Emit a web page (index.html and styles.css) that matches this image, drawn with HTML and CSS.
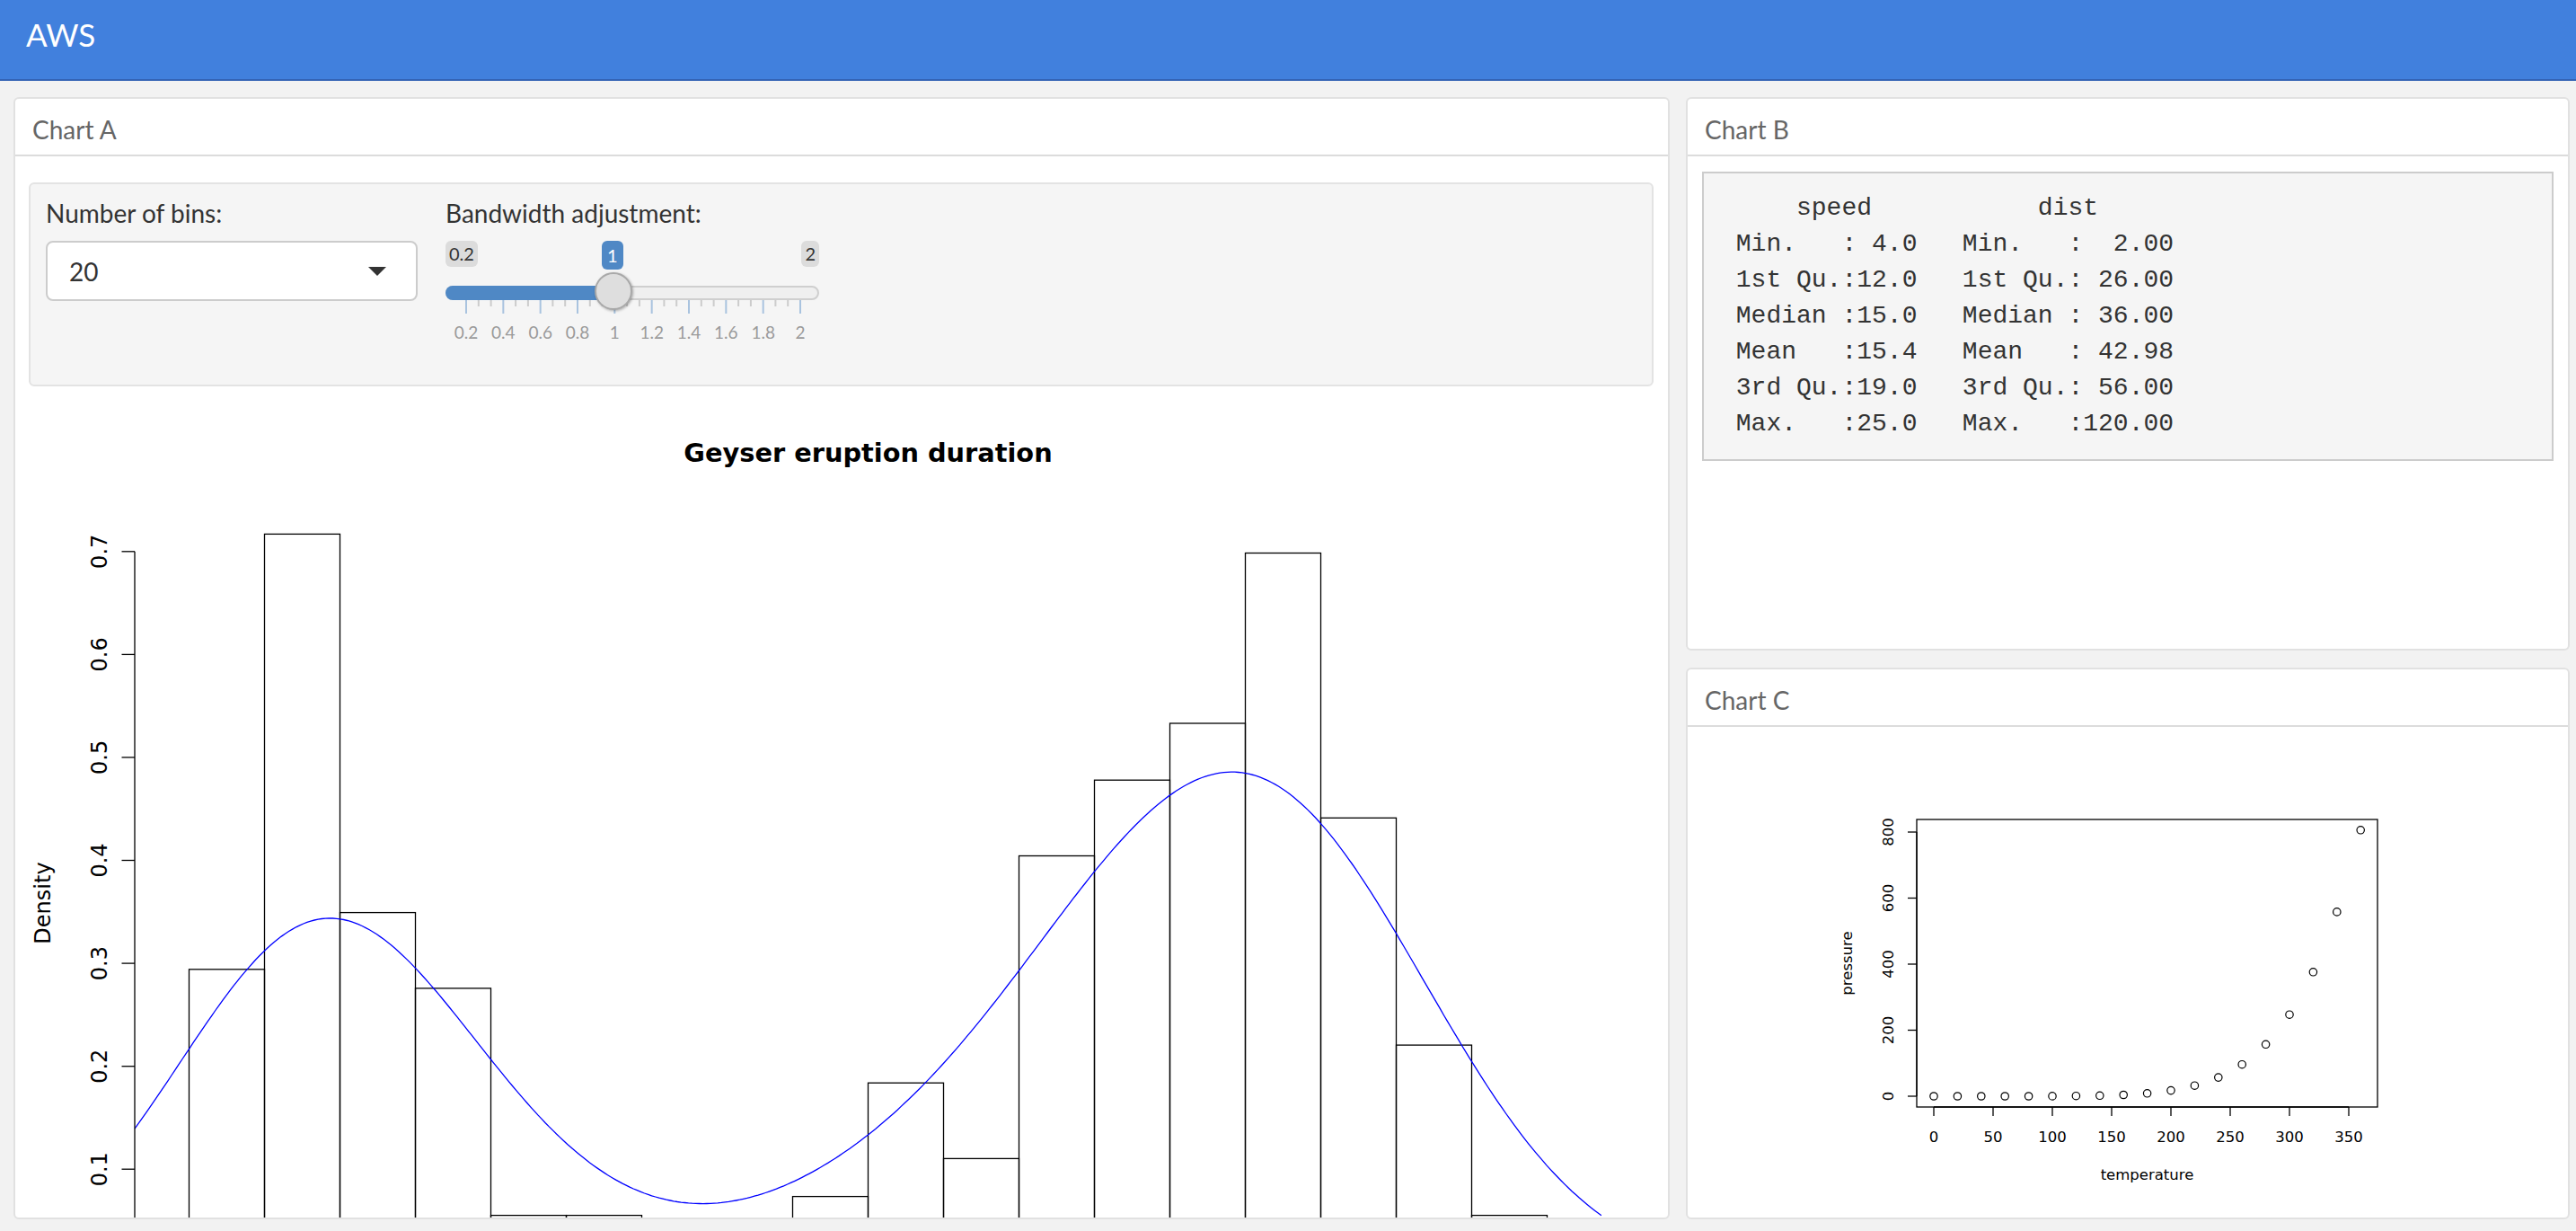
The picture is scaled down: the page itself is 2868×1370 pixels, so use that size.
FILE: index.html
```html
<!DOCTYPE html>
<html lang="en">
<head>
<meta charset="utf-8">
<title>AWS</title>
<link rel="stylesheet" href="styles.css">
<script src="script.js" defer></script>
</head>
<body>
<header class="navbar"><span class="brand">AWS</span></header>
<main class="dash">
  <section class="card card-a">
    <div class="card-title">Chart A</div>
    <div class="card-body body-a">
      <div class="well">
        <div class="field field-bins">
          <label class="field-label">Number of bins:</label>
          <div class="select"><span class="select-value">20</span><span class="caret"></span></div>
        </div>
        <div class="field field-bw">
          <label class="field-label">Bandwidth adjustment:</label>
          <div class="slider">
            <div class="irs-labels"><span class="irs-tag">0.2</span><span class="irs-tag">2</span></div>
            <span class="irs-single">1</span>
            <div class="track"><div class="bar" style="width:189px"></div></div>
            <div class="handle"></div>
            <svg class="grid" width="416" height="52" viewBox="0 0 416 52">
              <g class="grid-major">
                <line x1="23" y1="0" x2="23" y2="15"/><line x1="64.33" y1="0" x2="64.33" y2="15"/><line x1="105.67" y1="0" x2="105.67" y2="15"/><line x1="147" y1="0" x2="147" y2="15"/><line x1="188.33" y1="0" x2="188.33" y2="15"/><line x1="229.67" y1="0" x2="229.67" y2="15"/><line x1="271" y1="0" x2="271" y2="15"/><line x1="312.33" y1="0" x2="312.33" y2="15"/><line x1="353.67" y1="0" x2="353.67" y2="15"/><line x1="395" y1="0" x2="395" y2="15"/>
              </g>
              <g class="grid-minor">
                <line x1="36.8" y1="0" x2="36.8" y2="7"/><line x1="50.6" y1="0" x2="50.6" y2="7"/>
                <line x1="78.1" y1="0" x2="78.1" y2="7"/><line x1="91.9" y1="0" x2="91.9" y2="7"/>
                <line x1="119.4" y1="0" x2="119.4" y2="7"/><line x1="133.2" y1="0" x2="133.2" y2="7"/>
                <line x1="160.8" y1="0" x2="160.8" y2="7"/><line x1="174.6" y1="0" x2="174.6" y2="7"/>
                <line x1="202.1" y1="0" x2="202.1" y2="7"/><line x1="215.9" y1="0" x2="215.9" y2="7"/>
                <line x1="243.4" y1="0" x2="243.4" y2="7"/><line x1="257.2" y1="0" x2="257.2" y2="7"/>
                <line x1="284.8" y1="0" x2="284.8" y2="7"/><line x1="298.6" y1="0" x2="298.6" y2="7"/>
                <line x1="326.1" y1="0" x2="326.1" y2="7"/><line x1="339.9" y1="0" x2="339.9" y2="7"/>
                <line x1="367.4" y1="0" x2="367.4" y2="7"/><line x1="381.2" y1="0" x2="381.2" y2="7"/>
              </g>
              <g class="grid-text">
                <text x="23" y="43">0.2</text><text x="64.33" y="43">0.4</text><text x="105.67" y="43">0.6</text><text x="147" y="43">0.8</text><text x="188.33" y="43">1</text><text x="229.67" y="43">1.2</text><text x="271" y="43">1.4</text><text x="312.33" y="43">1.6</text><text x="353.67" y="43">1.8</text><text x="395" y="43">2</text>
              </g>
            </svg>
          </div>
        </div>
      </div>
      <svg class="plot-a" width="1810" height="1151" viewBox="32 444 1810 1151">
        <defs><clipPath id="regionA"><rect x="150" y="562" width="1633" height="886"/></clipPath></defs>
        <text class="rtitle" x="966.5" y="514">Geyser eruption duration</text>
        <g class="rbars">
          <rect x="210.5" y="1078.8" width="84" height="337"/>
          <rect x="294.5" y="594.4" width="84" height="821.4"/>
          <rect x="378.5" y="1015.6" width="84" height="400.2"/>
          <rect x="462.5" y="1099.9" width="84" height="315.9"/>
          <rect x="546.5" y="1352.6" width="84" height="63.2"/>
          <rect x="630.5" y="1352.6" width="84" height="63.2"/>
          <rect x="714.5" y="1394.7" width="84" height="21.1"/>
          <rect x="798.5" y="1373.7" width="84" height="42.1"/>
          <rect x="882.5" y="1331.6" width="84" height="84.2"/>
          <rect x="966.5" y="1205.2" width="84" height="210.6"/>
          <rect x="1050.5" y="1289.4" width="84" height="126.4"/>
          <rect x="1134.5" y="952.5" width="84" height="463.3"/>
          <rect x="1218.5" y="868.2" width="84" height="547.6"/>
          <rect x="1302.5" y="805" width="84" height="610.8"/>
          <rect x="1386.5" y="615.5" width="84" height="800.3"/>
          <rect x="1470.5" y="910.3" width="84" height="505.5"/>
          <rect x="1554.5" y="1163.1" width="84" height="252.7"/>
          <rect x="1638.5" y="1352.6" width="84" height="63.2"/>
        </g>
        <path id="dens" class="rdens" clip-path="url(#regionA)" d=""/>
        <g class="raxis">
          <line x1="150" y1="613.8" x2="150" y2="1415.8"/>
          <line x1="150" y1="1415.8" x2="135.5" y2="1415.8"/>
          <line x1="150" y1="1301.2" x2="135.5" y2="1301.2"/>
          <line x1="150" y1="1186.7" x2="135.5" y2="1186.7"/>
          <line x1="150" y1="1072.1" x2="135.5" y2="1072.1"/>
          <line x1="150" y1="957.5" x2="135.5" y2="957.5"/>
          <line x1="150" y1="842.9" x2="135.5" y2="842.9"/>
          <line x1="150" y1="728.4" x2="135.5" y2="728.4"/>
          <line x1="150" y1="613.8" x2="135.5" y2="613.8"/>
        </g>
        <g class="rlab">
          <text transform="translate(118.5 1301.2) rotate(-90)">0.1</text>
          <text transform="translate(118.5 1186.7) rotate(-90)">0.2</text>
          <text transform="translate(118.5 1072.1) rotate(-90)">0.3</text>
          <text transform="translate(118.5 957.5) rotate(-90)">0.4</text>
          <text transform="translate(118.5 842.9) rotate(-90)">0.5</text>
          <text transform="translate(118.5 728.4) rotate(-90)">0.6</text>
          <text transform="translate(118.5 613.8) rotate(-90)">0.7</text>
          <text transform="translate(56 1005) rotate(-90)">Density</text>
        </g>
      </svg>
    </div>
  </section>
  <div class="side">
    <section class="card card-b">
      <div class="card-title">Chart B</div>
      <div class="card-body body-b">
<pre class="verbatim">     speed           dist       
 Min.   : 4.0   Min.   :  2.00  
 1st Qu.:12.0   1st Qu.: 26.00  
 Median :15.0   Median : 36.00  
 Mean   :15.4   Mean   : 42.98  
 3rd Qu.:19.0   3rd Qu.: 56.00  
 Max.   :25.0   Max.   :120.00  </pre>
      </div>
    </section>
    <section class="card card-c">
      <div class="card-title">Chart C</div>
      <div class="card-body body-c">
        <svg class="plot-c" width="672" height="502" viewBox="2033 831 672 502">
          <rect class="cbox" x="2134" y="912" width="513" height="320"/>
          <g class="caxis">
            <line x1="2134" y1="1220" x2="2134" y2="926"/>
            <line x1="2134" y1="1220" x2="2124" y2="1220"/>
            <line x1="2134" y1="1146.5" x2="2124" y2="1146.5"/>
            <line x1="2134" y1="1073" x2="2124" y2="1073"/>
            <line x1="2134" y1="999.5" x2="2124" y2="999.5"/>
            <line x1="2134" y1="926" x2="2124" y2="926"/>
            <line x1="2153" y1="1232" x2="2615" y2="1232"/>
            <line x1="2153" y1="1232" x2="2153" y2="1242"/>
            <line x1="2219" y1="1232" x2="2219" y2="1242"/>
            <line x1="2285" y1="1232" x2="2285" y2="1242"/>
            <line x1="2351" y1="1232" x2="2351" y2="1242"/>
            <line x1="2417" y1="1232" x2="2417" y2="1242"/>
            <line x1="2483" y1="1232" x2="2483" y2="1242"/>
            <line x1="2549" y1="1232" x2="2549" y2="1242"/>
            <line x1="2615" y1="1232" x2="2615" y2="1242"/>
          </g>
          <g class="clab">
            <text transform="translate(2108 1220) rotate(-90)">0</text>
            <text transform="translate(2108 1146.5) rotate(-90)">200</text>
            <text transform="translate(2108 1073) rotate(-90)">400</text>
            <text transform="translate(2108 999.5) rotate(-90)">600</text>
            <text transform="translate(2108 926) rotate(-90)">800</text>
            <text x="2153" y="1270.7">0</text>
            <text x="2219" y="1270.7">50</text>
            <text x="2285" y="1270.7">100</text>
            <text x="2351" y="1270.7">150</text>
            <text x="2417" y="1270.7">200</text>
            <text x="2483" y="1270.7">250</text>
            <text x="2549" y="1270.7">300</text>
            <text x="2615" y="1270.7">350</text>
            <text x="2390.5" y="1313">temperature</text>
            <text transform="translate(2062 1072) rotate(-90)">pressure</text>
          </g>
          <g class="cpts">
            <circle cx="2153" cy="1220" r="4.2"/><circle cx="2179.4" cy="1220" r="4.2"/><circle cx="2205.8" cy="1220" r="4.2"/><circle cx="2232.2" cy="1220" r="4.2"/><circle cx="2258.6" cy="1220" r="4.2"/><circle cx="2285" cy="1219.9" r="4.2"/><circle cx="2311.4" cy="1219.7" r="4.2"/><circle cx="2337.8" cy="1219.3" r="4.2"/><circle cx="2364.2" cy="1218.5" r="4.2"/><circle cx="2390.6" cy="1216.8" r="4.2"/><circle cx="2417" cy="1213.6" r="4.2"/><circle cx="2443.4" cy="1208.2" r="4.2"/><circle cx="2469.8" cy="1199.1" r="4.2"/><circle cx="2496.2" cy="1184.7" r="4.2"/><circle cx="2522.6" cy="1162.3" r="4.2"/><circle cx="2549" cy="1129.2" r="4.2"/><circle cx="2575.4" cy="1081.8" r="4.2"/><circle cx="2601.8" cy="1014.9" r="4.2"/><circle cx="2628.2" cy="923.8" r="4.2"/>
          </g>
        </svg>
      </div>
    </section>
  </div>
</main>
</body>
</html>
```

FILE: styles.css
```css
* { box-sizing: border-box; }
html, body { margin: 0; padding: 0; }
body {
  width: 2868px;
  height: 1370px;
  overflow: hidden;
  background: #f2f2f2;
  font-family: Lato, "Noto Sans", sans-serif;
  color: #333;
}
.navbar {
  height: 90px;
  background: #4180dd;
  border-bottom: 2px solid #3463b5;
}
.brand {
  display: block;
  padding: 17px 0 0 29px;
  font-size: 35px;
  line-height: 42px;
  color: #fff;
}
.dash {
  display: flex;
  gap: 18px;
  height: 1280px;
  padding: 18px 7px 13px 15px;
}
.card {
  background: #fff;
  border: 2px solid #e1e1e1;
  border-radius: 6px;
  display: flex;
  flex-direction: column;
  overflow: hidden;
}
.card-a { width: 1844px; flex: none; }
.side { width: 984px; flex: none; display: flex; flex-direction: column; gap: 19px; }
.card-b { height: 616px; flex: none; }
.card-c { flex: 1; }
.card-title {
  flex: none;
  height: 64px;
  padding: 17px 0 0 19px;
  border-bottom: 2px solid #dcdcdc;
  font-size: 28px;
  line-height: 34px;
  color: #666;
}
.card-body { flex: 1; min-height: 0; overflow: hidden; }
.body-a { padding: 29px 16px 0 15px; }
.well {
  height: 227px;
  border: 2px solid #e3e3e3;
  border-radius: 6px;
  background: #f5f5f5;
  padding: 15px 17px;
  display: flex;
  gap: 31px;
}
.field-label {
  display: block;
  font-size: 28px;
  line-height: 34px;
  color: #333;
}
.select {
  margin-top: 14px;
  width: 414px;
  height: 67px;
  border: 2px solid #ccc;
  border-radius: 8px;
  background: #fff;
  display: flex;
  align-items: center;
  justify-content: space-between;
  padding: 0 33px 0 24px;
  font-size: 28px;
  line-height: 34px;
  color: #333;
}
.caret {
  width: 0;
  height: 0;
  border-left: 10px solid transparent;
  border-right: 10px solid transparent;
  border-top: 10px solid #333;
}
.field-bw { width: 416px; }
.slider { position: relative; margin-top: 14px; }
.irs-labels { display: flex; justify-content: space-between; }
.irs-tag {
  font-size: 20px;
  line-height: 29px;
  padding: 0 4px;
  border-radius: 6px;
  background: #dcdcdc;
  color: #333;
}
.irs-single {
  position: absolute;
  top: 0;
  left: 174px;
  font-size: 20px;
  line-height: 32px;
  padding: 0 6px;
  border-radius: 6px;
  background: #4f88c5;
  color: #fff;
}
.track {
  position: relative;
  margin-top: 21px;
  height: 16px;
  border: 2px solid #cfcfcf;
  border-radius: 8px;
  background: #efefef;
}
.bar {
  position: absolute;
  left: -2px;
  top: -2px;
  bottom: -2px;
  border-radius: 8px 0 0 8px;
  background: #4f88c5;
}
.handle {
  position: absolute;
  left: 166px;
  top: 35px;
  width: 42px;
  height: 42px;
  border-radius: 50%;
  background: #dedede;
  border: 2px solid #a9a9a9;
  box-shadow: 1px 1px 3px rgba(0, 0, 0, 0.3);
}
.grid { display: block; }
.grid-major line { stroke: #a9c3df; stroke-width: 2; }
.grid-minor line { stroke: #cccccc; stroke-width: 2; }
.grid-text text {
  font-family: Lato, "Noto Sans", sans-serif;
  font-size: 19px;
  fill: #9a9a9a;
  text-anchor: middle;
}
.plot-a { display: block; margin-top: 14px; }
.rtitle {
  font-family: "DejaVu Sans", sans-serif;
  font-weight: bold;
  font-size: 28.8px;
  text-anchor: middle;
  fill: #000;
}
.rbars rect { fill: none; stroke: #000; stroke-width: 1.3; }
.rdens { fill: none; stroke: #0000ff; stroke-width: 1.3; }
.raxis line { stroke: #000; stroke-width: 1.3; }
.rlab text {
  font-family: "DejaVu Sans", sans-serif;
  font-size: 24px;
  text-anchor: middle;
  fill: #000;
}
.body-b { padding: 17px 16px; }
.verbatim {
  margin: 0;
  padding: 19px;
  border: 2px solid #ccc;
  background: #f5f5f5;
  font-family: "Courier New", "Liberation Mono", monospace;
  font-size: 28px;
  line-height: 40px;
  color: #333;
}
.body-c { display: flex; align-items: center; justify-content: center; }
.plot-c { display: block; }
.cbox { fill: none; stroke: #000; stroke-width: 1.3; }
.caxis line { stroke: #000; stroke-width: 1.3; }
.clab text {
  font-family: "DejaVu Sans", sans-serif;
  font-size: 16.5px;
  text-anchor: middle;
  fill: #000;
}
.cpts circle { fill: none; stroke: #000; stroke-width: 1.2; }
```

FILE: script.js
```js
(function () {
  var counts = [16, 39, 19, 15, 3, 3, 1, 2, 4, 10, 6, 22, 26, 29, 38, 24, 12, 3];
  var n = 0;
  for (var i = 0; i < counts.length; i++) n += counts[i];
  var h = 0.325;
  function erf(x) {
    var s = x < 0 ? -1 : 1;
    x = Math.abs(x);
    var t = 1 / (1 + 0.3275911 * x);
    var y = 1 - (((((1.061405429 * t - 1.453152027) * t) + 1.421413741) * t - 0.284496736) * t + 0.254829592) * t * Math.exp(-x * x);
    return s * y;
  }
  function Phi(z) { return 0.5 * (1 + erf(z / Math.SQRT2)); }
  function dens(x) {
    var s = 0;
    for (var i = 0; i < counts.length; i++) {
      var lo = 1.6 + 0.2 * i, hi = lo + 0.2;
      s += counts[i] * (Phi((hi - x) / h) - Phi((lo - x) / h)) / 0.2;
    }
    return s / n;
  }
  var pts = [];
  for (var k = 0; k <= 400; k++) {
    var v = 1.456 + k * (5.344 - 1.456) / 400;
    var px = 210.5 + (v - 1.6) * 420;
    var py = 1415.8 - dens(v) * 1145.7;
    pts.push(px.toFixed(1) + ',' + py.toFixed(1));
  }
  var el = document.getElementById('dens');
  if (el) el.setAttribute('d', 'M' + pts.join('L'));
})();
```
